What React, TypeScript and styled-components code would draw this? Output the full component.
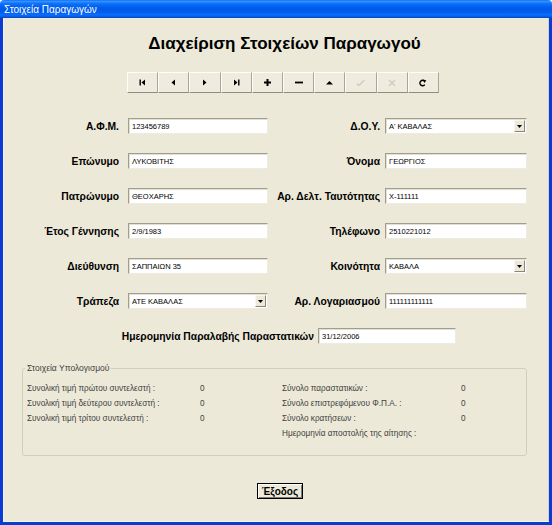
import React from "react";
import styled, {createGlobalStyle} from "styled-components";

//region Types
type FieldData = {
    label: string,
    value: string,
    combo?: boolean
}

type IconKind = "first" | "prev" | "next" | "last" | "add" | "remove" | "up" | "post" | "cancel" | "refresh";
//endregion

//region Data
const leftFields: FieldData[] = [
    {label: "Α.Φ.Μ.", value: "123456789"},
    {label: "Επώνυμο", value: "ΛΥΚΟΒΙΤΗΣ"},
    {label: "Πατρώνυμο", value: "ΘΕΟΧΑΡΗΣ"},
    {label: "Έτος Γέννησης", value: "2/9/1983"},
    {label: "Διεύθυνση", value: "ΣΑΠΠΑΙΩΝ 35"},
    {label: "Τράπεζα", value: "ΑΤΕ ΚΑΒΑΛΑΣ", combo: true}
];

const rightFields: FieldData[] = [
    {label: "Δ.Ο.Υ.", value: "Α' ΚΑΒΑΛΑΣ", combo: true},
    {label: "Όνομα", value: "ΓΕΩΡΓΙΟΣ"},
    {label: "Αρ. Δελτ. Ταυτότητας", value: "Χ-111111"},
    {label: "Τηλέφωνο", value: "2510221012"},
    {label: "Κοινότητα", value: "ΚΑΒΑΛΑ", combo: true},
    {label: "Αρ. Λογαριασμού", value: "111111111111"}
];

const navButtons: IconKind[] = ["first", "prev", "next", "last", "add", "remove", "up", "post", "cancel", "refresh"];

const leftTotals = [
    ["Συνολική τιμή πρώτου συντελεστή :", "0"],
    ["Συνολική τιμή δεύτερου συντελεστή :", "0"],
    ["Συνολική τιμή τρίτου συντελεστή :", "0"]
];

const rightTotals = [
    ["Σύνολο παραστατικών :", "0"],
    ["Σύνολο επιστρεφόμενου Φ.Π.Α. :", "0"],
    ["Σύνολο κρατήσεων :", "0"],
    ["Ημερομηνία αποστολής της αίτησης :", ""]
];
//endregion

//region Styled
const GlobalStyle = createGlobalStyle`
    html, body {
        margin: 0;
        padding: 0;
        background: #fff;
    }
    body {
        font-family: "Liberation Sans", Arial, sans-serif;
    }
`;

const Window = styled.div`
    width: 552px;
    height: 525px;
    display: flex;
    flex-direction: column;
`;

const TitleBar = styled.div`
    height: 18px;
    flex: none;
    display: flex;
    align-items: center;
    padding-left: 4px;
    color: #fff;
    font-size: 10px;
    border-radius: 4px 4px 0 0;
    background: linear-gradient(#0a5ff0 0%, #3d98ff 6%, #2a8dff 10%, #1680ff 15%, #0870fa 22%,
        #0566f2 32%, #035deb 42%, #005ae8 52%, #005ced 62%, #0262f4 72%, #0a6dfb 82%,
        #0564ef 90%, #0353d8 95%, #0442b0 100%);
`;

const Body = styled.div`
    flex: 1;
    display: flex;
    flex-direction: column;
    background: #ece9d8;
    border: 3px solid #0a3cd4;
    border-top: none;
    box-shadow: inset 1px 0 0 #f6f4ec, inset 0 -1px 0 #f6f4ec, inset -1px 0 0 #d6d3c4;
`;

const Heading = styled.div`
    margin: 16px 0 0 17px;
    text-align: center;
    font-size: 17px;
    line-height: 20px;
    font-weight: bold;
    color: #000;
`;

const Toolbar = styled.div`
    display: flex;
    margin: 18px 0 0 124px;
`;

const NavButton = styled.div`
    width: 31.2px;
    height: 21px;
    box-sizing: border-box;
    display: flex;
    align-items: center;
    justify-content: center;
    background: #efecdf;
    border: 1px solid;
    border-color: #fdfdfa #a9a696 #8f8c7d #fdfdfa;
`;

const FormGrid = styled.div`
    display: grid;
    grid-template-columns: 108px 140px 117px 142px;
    grid-auto-rows: 16px;
    row-gap: 19px;
    align-items: center;
    margin: 25px 0 0 17px;
`;

const Label = styled.div<{ $gap: number }>`
    text-align: right;
    padding-right: ${props => props.$gap}px;
    font-size: 10.3px;
    font-weight: bold;
    color: #000;
    white-space: nowrap;
`;

const TextBox = styled.div<{ $width?: number }>`
    width: ${props => props.$width ? props.$width + "px" : "100%"};
    height: 16px;
    box-sizing: border-box;
    display: flex;
    align-items: center;
    background: #fff;
    border: 1px solid;
    border-color: #a19e8f #eeece2 #eeece2 #a19e8f;
    box-shadow: inset 1px 1px 0 #e2dfd3;
    padding-left: 3px;
    font-size: 7.5px;
    color: #000;
    white-space: nowrap;
    overflow: hidden;
`;

const ComboText = styled.div`
    flex: 1;
`;

const DropButton = styled.div`
    width: 11px;
    height: 12px;
    margin-right: 1px;
    box-sizing: border-box;
    display: flex;
    align-items: center;
    justify-content: center;
    background: #ece9d8;
    border: 1px solid;
    border-color: #f8f7f2 #8a877a #8a877a #f8f7f2;
`;

const DateRow = styled.div`
    grid-column: 1 / -1;
    display: grid;
    grid-template-columns: 294px 138px;
    column-gap: 4px;
    align-items: center;
`;

const GroupBox = styled.div`
    position: relative;
    height: 88px;
    box-sizing: border-box;
    margin: 24px 22px 0 19px;
    padding: 12px 0 0 4px;
    display: flex;
    border: 1px solid #d0d0bf;
    border-radius: 3px;
`;

const Legend = styled.div`
    position: absolute;
    top: -6px;
    left: 2px;
    padding: 0 2px;
    background: #ece9d8;
    font-size: 8.5px;
    line-height: 11px;
    color: #3f3f3f;
`;

const TotalsColumn = styled.div<{ $width?: number }>`
    width: ${props => props.$width ? props.$width + "px" : "auto"};
    display: flex;
    flex-direction: column;
`;

const TotalsRow = styled.div`
    height: 15px;
    display: flex;
    align-items: center;
    font-size: 8.2px;
    color: #3f3f3f;
    white-space: nowrap;
`;

const TotalsLabel = styled.div<{ $width: number }>`
    width: ${props => props.$width}px;
`;

const ExitButton = styled.div`
    align-self: flex-start;
    width: 46px;
    height: 16px;
    box-sizing: border-box;
    margin: 27px 0 0 254px;
    display: flex;
    align-items: center;
    justify-content: center;
    background: #ece9d8;
    border: 1px solid #000;
    box-shadow: inset 1px 1px 0 #fff, inset -1px -1px 0 #7d7b70;
    font-size: 10px;
    font-weight: bold;
    color: #000;
`;
//endregion

const NavIcon = ({kind}: { kind: IconKind }) => {
    const grey = "#cfcbbd";
    switch (kind) {
        case "first":
            return <svg width="7" height="7" viewBox="0 0 7 7"><rect x="0.5" y="0.5" width="1.4" height="6" fill="#000"/><polygon points="6,0.5 6,6.5 2.5,3.5" fill="#000"/></svg>;
        case "prev":
            return <svg width="7" height="7" viewBox="0 0 7 7"><polygon points="5,0.5 5,6.5 1.5,3.5" fill="#000"/></svg>;
        case "next":
            return <svg width="7" height="7" viewBox="0 0 7 7"><polygon points="2,0.5 2,6.5 5.5,3.5" fill="#000"/></svg>;
        case "last":
            return <svg width="7" height="7" viewBox="0 0 7 7"><polygon points="1,0.5 1,6.5 4.5,3.5" fill="#000"/><rect x="5.1" y="0.5" width="1.4" height="6" fill="#000"/></svg>;
        case "add":
            return <svg width="7" height="7" viewBox="0 0 7 7"><rect x="0" y="2.5" width="7" height="2" fill="#000"/><rect x="2.5" y="0" width="2" height="7" fill="#000"/></svg>;
        case "remove":
            return <svg width="8" height="7" viewBox="0 0 8 7"><rect x="0" y="2.6" width="8" height="1.8" fill="#000"/></svg>;
        case "up":
            return <svg width="7" height="7" viewBox="0 0 7 7"><polygon points="0,5.5 7,5.5 3.5,2" fill="#000"/></svg>;
        case "post":
            return <svg width="9" height="8" viewBox="0 0 9 8"><polyline points="0.8,4.5 3,6.6 8.2,1.2" fill="none" stroke={grey} strokeWidth="1.4"/></svg>;
        case "cancel":
            return <svg width="8" height="8" viewBox="0 0 8 8"><path d="M1 1 L7 7 M7 1 L1 7" stroke={grey} strokeWidth="1.4"/></svg>;
        case "refresh":
            return <svg width="8" height="8" viewBox="0 0 8 8"><path d="M5.6 2.2 A2.7 2.7 0 1 0 5.8 5.6" fill="none" stroke="#000" strokeWidth="1.4"/><polygon points="4.2,0.4 7.4,1.6 5.2,4" fill="#000"/></svg>;
    }
};

const DropArrow = () => (
    <svg width="5" height="3" viewBox="0 0 5 3"><polygon points="0,0 5,0 2.5,3" fill="#000"/></svg>
);

const Field = ({field, width}: { field: FieldData, width?: number }) => (
    <TextBox $width={width}>
        <ComboText>{field.value}</ComboText>
        {field.combo && <DropButton><DropArrow/></DropButton>}
    </TextBox>
);

const App = () => {
    const rows = leftFields.map((left, i) => [left, rightFields[i]]);

    return (
        <>
            <GlobalStyle/>
            <Window>
                <TitleBar>Στοιχεία Παραγωγών</TitleBar>
                <Body>
                    <Heading>Διαχείριση Στοιχείων Παραγωγού</Heading>
                    <Toolbar>
                        {navButtons.map(kind => (
                            <NavButton key={kind}><NavIcon kind={kind}/></NavButton>
                        ))}
                    </Toolbar>
                    <FormGrid>
                        {rows.map(([left, right]) => (
                            <React.Fragment key={left.label}>
                                <Label $gap={9}>{left.label}</Label>
                                <Field field={left}/>
                                <Label $gap={5}>{right.label}</Label>
                                <Field field={right}/>
                            </React.Fragment>
                        ))}
                        <DateRow>
                            <Label $gap={0}>Ημερομηνία Παραλαβής Παραστατικών</Label>
                            <Field field={{label: "", value: "31/12/2006"}} width={138}/>
                        </DateRow>
                    </FormGrid>
                    <GroupBox>
                        <Legend>Στοιχεία Υπολογισμού</Legend>
                        <TotalsColumn $width={255}>
                            {leftTotals.map(([label, value]) => (
                                <TotalsRow key={label}>
                                    <TotalsLabel $width={173}>{label}</TotalsLabel>
                                    {value}
                                </TotalsRow>
                            ))}
                        </TotalsColumn>
                        <TotalsColumn>
                            {rightTotals.map(([label, value]) => (
                                <TotalsRow key={label}>
                                    <TotalsLabel $width={179}>{label}</TotalsLabel>
                                    {value}
                                </TotalsRow>
                            ))}
                        </TotalsColumn>
                    </GroupBox>
                    <ExitButton>Έξοδος</ExitButton>
                </Body>
            </Window>
        </>
    );
};

export default App;
